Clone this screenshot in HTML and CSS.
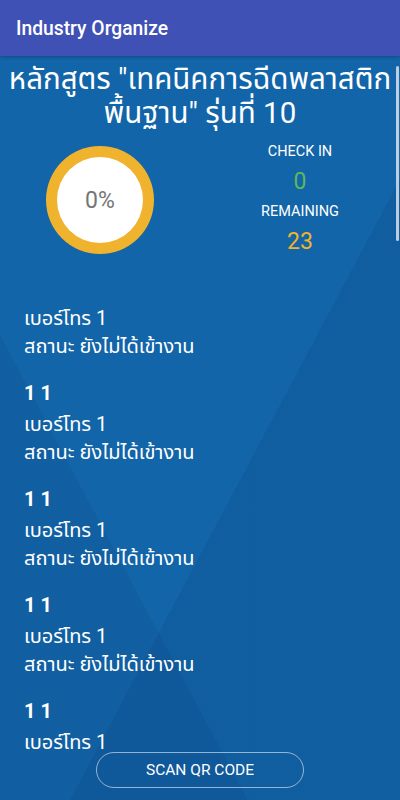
FILE: index.html
```html
<!DOCTYPE html>
<html lang="th">
<head>
<meta charset="utf-8">
<title>Industry Organize</title>
<link rel="stylesheet" href="styles.css">
</head>
<body>
<div class="app">
  <header class="appbar">Industry Organize</header>
  <main class="content">
    <h1 class="course"><span class="nw">หลักสูตร "เทคนิคการฉีดพลาสติก</span> <span class="nw">พื้นฐาน" รุ่นที่ 10</span></h1>
    <section class="stats">
      <div class="ring-col">
        <div class="ring"><div class="ring-inner">0%</div></div>
      </div>
      <div class="count-col">
        <div class="label">CHECK IN</div>
        <div class="num green">0</div>
        <div class="label">REMAINING</div>
        <div class="num orange">23</div>
      </div>
    </section>
    <ul class="list">
      <li class="item"><div class="name"></div><div class="line">เบอร์โทร 1</div><div class="line">สถานะ ยังไม่ได้เข้างาน</div></li>
      <li class="item"><div class="name">1 1</div><div class="line">เบอร์โทร 1</div><div class="line">สถานะ ยังไม่ได้เข้างาน</div></li>
      <li class="item"><div class="name">1 1</div><div class="line">เบอร์โทร 1</div><div class="line">สถานะ ยังไม่ได้เข้างาน</div></li>
      <li class="item"><div class="name">1 1</div><div class="line">เบอร์โทร 1</div><div class="line">สถานะ ยังไม่ได้เข้างาน</div></li>
      <li class="item"><div class="name">1 1</div><div class="line">เบอร์โทร 1</div></li>
    </ul>
  </main>
  <footer class="footer">
    <button class="scan">SCAN QR CODE</button>
  </footer>
  <div class="scrollbar"></div>
</div>
</body>
</html>
```
FILE: styles.css
```css
* { box-sizing: border-box; }
html, body { margin: 0; padding: 0; }
body {
  font-family: Roboto, "Noto Sans", "Noto Sans Thai", sans-serif;
  width: 400px;
  height: 800px;
  overflow: hidden;
}
.app {
  position: relative;
  width: 400px;
  height: 800px;
  overflow: hidden;
  background-color: #1265a8;
  background-image:
    linear-gradient(118deg, rgba(255,255,255,0) 0 60%, rgba(0,30,90,0.10) 60% 100%),
    linear-gradient(62deg, rgba(0,30,90,0.08) 0 30%, rgba(255,255,255,0) 30% 100%);
  display: flex;
  flex-direction: column;
}
.appbar {
  height: 56px;
  flex: none;
  background: #3f51b5;
  color: #fff;
  font-size: 19.3px;
  font-weight: 500;
  padding-left: 16px;
  display: flex;
  align-items: center;
  box-shadow: 0 1px 3px rgba(0,0,0,0.25);
}
.content {
  flex: 1;
  min-height: 0;
}
.course {
  margin: 6px 0 0;
  color: #fff;
  font-size: 29.5px;
  font-weight: 400;
  line-height: 34px;
  text-align: center;
}
.nw { white-space: nowrap; }
.stats {
  display: grid;
  grid-template-columns: 200px 200px;
  margin-top: 5px;
}
.ring-col {
  display: flex;
  justify-content: center;
  padding-top: 11px;
}
.ring {
  width: 108px;
  height: 108px;
  border-radius: 50%;
  background: #f0b32e;
  display: flex;
  align-items: center;
  justify-content: center;
}
.ring-inner {
  width: 86px;
  height: 86px;
  border-radius: 50%;
  background: #fff;
  color: #757575;
  font-size: 23px;
  display: flex;
  align-items: center;
  justify-content: center;
}
.count-col {
  display: flex;
  flex-direction: column;
  align-items: center;
  color: #fff;
  padding-top: 2px;
}
.label {
  font-size: 14.5px;
  line-height: 30px;
}
.num {
  font-size: 23px;
  line-height: 30px;
}
.green { color: #5cb85c; }
.orange { color: #f0b32e; }
.list {
  list-style: none;
  margin: 11px 0 0;
  padding: 0 24px;
  color: #fff;
}
.item {
  margin-bottom: 18px;
}
.name {
  height: 32px;
  line-height: 38px;
  font-size: 20px;
  font-weight: 700;
}
.line {
  margin-top: 8px;
  line-height: 20px;
  font-size: 20px;
}
.footer {
  flex: none;
  height: 48px;
  display: flex;
  justify-content: center;
}
.scan {
  width: 208px;
  height: 36px;
  border: 1px solid rgba(255,255,255,0.55);
  border-radius: 18px;
  background: transparent;
  color: #fff;
  font-family: Roboto, sans-serif;
  font-size: 15.5px;
  font-weight: 400;
  cursor: pointer;
}
.scrollbar {
  position: absolute;
  right: 1px;
  top: 66px;
  width: 3px;
  height: 175px;
  border-radius: 2px;
  background: rgba(220,225,235,0.85);
}
```
